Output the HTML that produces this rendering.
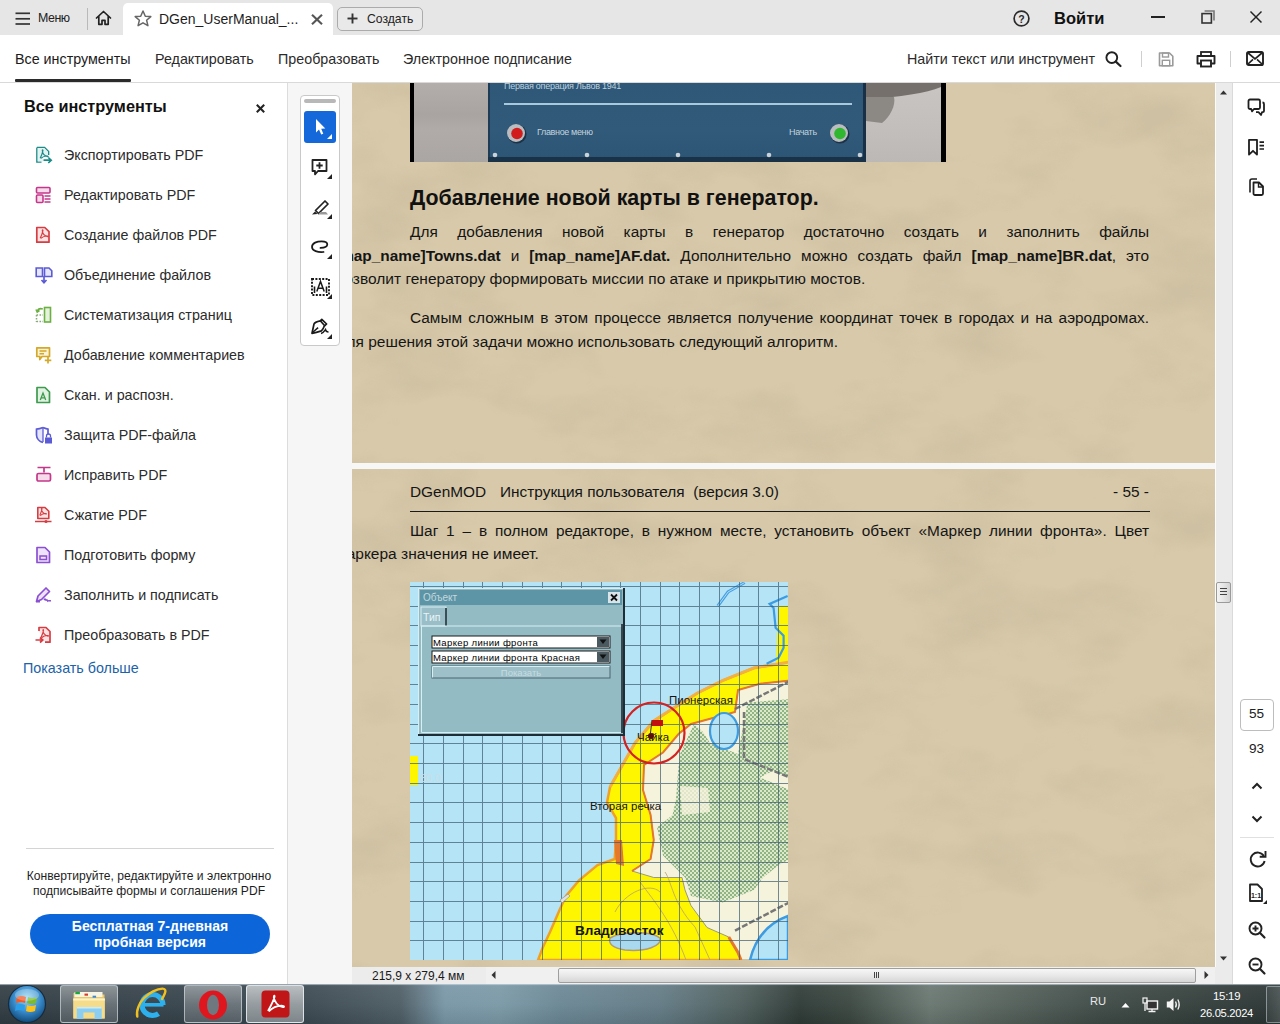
<!DOCTYPE html>
<html><head><meta charset="utf-8">
<style>
*{margin:0;padding:0;box-sizing:border-box}
html,body{width:1280px;height:1024px;overflow:hidden;background:#fff;font-family:"Liberation Sans",sans-serif;color:#222}
.a{position:absolute;white-space:nowrap;line-height:1}
svg{position:absolute;overflow:visible}
#titlebar{position:absolute;left:0;top:0;width:1280px;height:35px;background:#e6e6e6}
#toolbar{position:absolute;left:0;top:35px;width:1280px;height:48px;background:#fff;border-bottom:1px solid #d9d9d9}
#leftpanel{position:absolute;left:0;top:83px;width:288px;height:901px;background:#fff;border-right:1px solid #dcdcdc}
#graycol{position:absolute;left:288px;top:83px;width:64px;height:901px;background:#f6f6f6}
#doc{position:absolute;left:352px;top:83px;width:863px;height:884px;background:#f7f7f8;overflow:hidden}
#vscroll{position:absolute;left:1215px;top:83px;width:17px;height:884px;background:#ebebeb}
#rside{position:absolute;left:1232px;top:83px;width:48px;height:901px;background:#fff;border-left:1px solid #dadada}
#status{position:absolute;left:352px;top:967px;width:863px;height:17px;background:#ececec}
#taskbar{position:absolute;left:0;top:984px;width:1280px;height:40px;overflow:hidden}
.t{font-size:15.4px;color:#151515}
.j{position:absolute;white-space:nowrap;font-size:15.4px;line-height:1;color:#151515;text-align:justify;text-align-last:justify;white-space:normal;height:18px;overflow:visible}
</style></head><body>

<div id="titlebar">
<svg style="left:15px;top:12px" width="16" height="14"><g stroke="#333" stroke-width="1.7"><line x1="0.5" y1="1.3" x2="15" y2="1.3"/><line x1="0.5" y1="6.8" x2="15" y2="6.8"/><line x1="0.5" y1="12" x2="15" y2="12"/></g></svg>
<div class="a" style="left:38px;top:12px;font-size:12.4px;letter-spacing:-0.45px;color:#222">Меню</div>
<div style="position:absolute;left:87px;top:8px;width:1px;height:22px;background:#b9b9b9"></div>
<svg style="left:95px;top:10px" width="17" height="16" viewBox="0 0 17 16"><path d="M1.5 8 L8.5 1.5 L15.5 8 M3.8 6.2 V14.3 H7 V10.3 H10 V14.3 H13.2 V6.2" fill="none" stroke="#222" stroke-width="1.7" stroke-linejoin="round" stroke-linecap="round"/></svg>
<div style="position:absolute;left:123px;top:3px;width:210px;height:32px;background:#fff;border-radius:5px 5px 0 0"></div>
<svg style="left:134px;top:10px" width="18" height="17" viewBox="0 0 18 17"><path d="M9 1 L11.3 6.2 L16.8 6.6 L12.6 10.2 L13.9 15.7 L9 12.8 L4.1 15.7 L5.4 10.2 L1.2 6.6 L6.7 6.2 Z" fill="none" stroke="#666" stroke-width="1.5" stroke-linejoin="round"/></svg>
<div class="a" style="left:159px;top:12px;font-size:14px;color:#1e1e1e">DGen_UserManual_...</div>
<svg style="left:311px;top:14px" width="12" height="11"><g stroke="#555" stroke-width="2.1"><line x1="1" y1="0.8" x2="11" y2="10.2"/><line x1="11" y1="0.8" x2="1" y2="10.2"/></g></svg>
<div style="position:absolute;left:337px;top:7px;width:86px;height:24px;border:1px solid #ababab;border-radius:5px;background:#e9e9e9"></div>
<svg style="left:347px;top:13px" width="11" height="11"><g stroke="#333" stroke-width="1.9"><line x1="5.5" y1="0.5" x2="5.5" y2="10.5"/><line x1="0.5" y1="5.5" x2="10.5" y2="5.5"/></g></svg>
<div class="a" style="left:367px;top:13px;font-size:12.2px;color:#222">Создать</div>
<svg style="left:1013px;top:10px" width="17" height="17" viewBox="0 0 17 17"><circle cx="8.5" cy="8.5" r="7.4" fill="none" stroke="#2a2a2a" stroke-width="1.7"/><text x="8.5" y="12.6" text-anchor="middle" font-family="Liberation Sans" font-weight="700" font-size="10.5" fill="#2a2a2a">?</text></svg>
<div class="a" style="left:1054px;top:10px;font-size:16.5px;font-weight:700;color:#111">Войти</div>
<div style="position:absolute;left:1151px;top:16px;width:14px;height:2px;background:#222"></div>
<svg style="left:1201px;top:10px" width="14" height="14" viewBox="0 0 14 14"><rect x="1" y="3.6" width="9.4" height="9.4" fill="none" stroke="#333" stroke-width="1.6"/><path d="M3.6 1 H13 V10.4" fill="none" stroke="#777" stroke-width="1.6"/></svg>
<svg style="left:1250px;top:11px" width="12" height="12"><g stroke="#222" stroke-width="1.5"><line x1="0.5" y1="0.5" x2="11.5" y2="11.5"/><line x1="11.5" y1="0.5" x2="0.5" y2="11.5"/></g></svg>
</div>
<div id="toolbar">
<div class="a" style="left:15px;top:17px;font-size:14.3px;color:#1b1b1b">Все инструменты</div>
<div style="position:absolute;left:15px;top:44px;width:116px;height:3px;background:#2b2b2b;border-radius:1px"></div>
<div class="a" style="left:155px;top:17px;font-size:14.3px;color:#2b2b2b">Редактировать</div>
<div class="a" style="left:278px;top:17px;font-size:14.3px;color:#2b2b2b">Преобразовать</div>
<div class="a" style="left:403px;top:17px;font-size:14.3px;color:#2b2b2b">Электронное подписание</div>
<div class="a" style="left:907px;top:17px;font-size:14.3px;color:#2b2b2b">Найти текст или инструмент</div>
<svg style="left:1105px;top:16px" width="18" height="16" viewBox="0 0 18 16"><circle cx="6.8" cy="6.6" r="5.4" fill="none" stroke="#222" stroke-width="1.9"/><line x1="10.8" y1="10.6" x2="15.5" y2="15" stroke="#222" stroke-width="2.2" stroke-linecap="round"/></svg>
<div style="position:absolute;left:1141px;top:16px;width:1px;height:16px;background:#cfcfcf"></div>
<svg style="left:1158px;top:17px" width="16" height="15" viewBox="0 0 16 15"><path d="M1.5 1 H11.5 L14.8 4.3 V13.8 H1.5 Z" fill="none" stroke="#9a9a9a" stroke-width="1.6" stroke-linejoin="round"/><rect x="4.5" y="1" width="6" height="4" fill="none" stroke="#9a9a9a" stroke-width="1.4"/><rect x="4.3" y="8.3" width="7.4" height="5.5" fill="none" stroke="#9a9a9a" stroke-width="1.4"/></svg>
<svg style="left:1196px;top:16px" width="20" height="17" viewBox="0 0 20 17"><rect x="5" y="1" width="10" height="4" fill="none" stroke="#222" stroke-width="1.8"/><path d="M4.5 12.5 H1.5 V5 H18.5 V12.5 H15.5" fill="none" stroke="#222" stroke-width="1.9" stroke-linejoin="round"/><rect x="5" y="9.5" width="10" height="6" fill="none" stroke="#222" stroke-width="1.9"/></svg>
<div style="position:absolute;left:1230px;top:16px;width:1px;height:16px;background:#cfcfcf"></div>
<svg style="left:1246px;top:16px" width="18" height="15" viewBox="0 0 18 15"><rect x="1" y="1" width="16" height="13" rx="1.6" fill="none" stroke="#222" stroke-width="1.9"/><path d="M1.5 1.5 L9 8 L16.5 1.5 M1.5 13.5 L7 8.3 M16.5 13.5 L11 8.3" fill="none" stroke="#222" stroke-width="1.7"/></svg>
</div>
<div id="leftpanel">
<div class="a" style="left:24px;top:15px;font-size:16.3px;font-weight:700;color:#111">Все инструменты</div>
<svg style="left:256px;top:21px" width="9" height="9"><g stroke="#222" stroke-width="2"><line x1="0.8" y1="0.8" x2="8.2" y2="8.2"/><line x1="8.2" y1="0.8" x2="0.8" y2="8.2"/></g></svg>
<svg style="left:35px;top:63px" width="18" height="18" viewBox="0 0 18 18"><path d="M2 1.5 H9.5 L13.5 5.5 V9 M13.5 9" fill="none" stroke="#1b8b88" stroke-width="1.7"/><path d="M2 1.5 V16 H6.5" fill="none" stroke="#1b8b88" stroke-width="1.7"/><path d="M2.5 2 H9.3 L13 5.7 V10 H8 V15.5 H2.5Z" fill="#e3f3f2"/><path d="M5.2 12.2 C6.5 9.5 7.6 7 7.9 4.6 C8 3.5 7.2 3.6 7.3 4.8 C7.6 7.5 9.6 10 12.6 10.6 C13.4 10.8 13.4 10.1 12.4 10 C10 9.9 7.8 10.6 5.8 12.4" fill="none" stroke="#1b8b88" stroke-width="1.2"/><path d="M8.5 14.2 H16 M13.3 11.5 L16.2 14.2 L13.3 17" fill="none" stroke="#1b8b88" stroke-width="1.7"/></svg>
<div class="a" style="left:64px;top:65px;font-size:14.3px;color:#2c2c2c">Экспортировать PDF</div>
<svg style="left:35px;top:103px" width="18" height="18" viewBox="0 0 18 18"><rect x="1.5" y="1.5" width="13.5" height="5.5" rx="1" fill="#f6dcea" stroke="#c4378a" stroke-width="1.6"/><rect x="1.5" y="9" width="6.5" height="7.5" rx="1" fill="#f6dcea" stroke="#c4378a" stroke-width="1.6"/><path d="M9.5 10 H15.5 M9.5 13 H15.5 M9.5 16 H15.5" stroke="#c4378a" stroke-width="1.6"/></svg>
<div class="a" style="left:64px;top:105px;font-size:14.3px;color:#2c2c2c">Редактировать PDF</div>
<svg style="left:35px;top:143px" width="18" height="18" viewBox="0 0 18 18"><path d="M1.8 1.5 H9.8 L14 5.7 V16.2 H1.8 Z" fill="#fbe3e3" stroke="#d63d43" stroke-width="1.7" stroke-linejoin="round"/><path d="M5.2 12.2 C6.5 9.5 7.6 7 7.9 4.6 C8 3.5 7.2 3.6 7.3 4.8 C7.6 7.5 9.6 10 12.6 10.6 C13.4 10.8 13.4 10.1 12.4 10 C10 9.9 7.8 10.6 5.8 12.4" fill="none" stroke="#d63d43" stroke-width="1.2"/></svg>
<div class="a" style="left:64px;top:145px;font-size:14.3px;color:#2c2c2c">Создание файлов PDF</div>
<svg style="left:35px;top:183px" width="18" height="18" viewBox="0 0 18 18"><path d="M1.2 2 H7.5 V10.5 H1.2 Z" fill="#e6e6fb" stroke="#5b5bd6" stroke-width="1.6"/><path d="M9.5 2 H14 L16.8 4.8 V10.5 H9.5 Z" fill="#e6e6fb" stroke="#5b5bd6" stroke-width="1.6"/><path d="M9 10 V16.5 M6.5 14 L9 16.8 L11.5 14" fill="none" stroke="#5b5bd6" stroke-width="1.7"/></svg>
<div class="a" style="left:64px;top:185px;font-size:14.3px;color:#2c2c2c">Объединение файлов</div>
<svg style="left:35px;top:223px" width="18" height="18" viewBox="0 0 18 18"><rect x="9.5" y="1.5" width="6" height="14.5" fill="#e5f3dc" stroke="#6cb043" stroke-width="1.6"/><path d="M1.5 9 H8 M1.5 15.5 H8 M1.5 9 V16" stroke="#8aa87a" stroke-width="1.5" stroke-dasharray="1.6 1.4"/><path d="M7.8 3 C5 2.2 3 3 2.2 5.5 M1 3.5 L2.2 6 L4.5 4.5" fill="none" stroke="#6cb043" stroke-width="1.6"/></svg>
<div class="a" style="left:64px;top:225px;font-size:14.3px;color:#2c2c2c">Систематизация страниц</div>
<svg style="left:35px;top:263px" width="18" height="18" viewBox="0 0 18 18"><path d="M1.8 1.8 H14.5 V10.5 H7 L4.8 13.5 V10.5 H1.8 Z" fill="#fbf3d6" stroke="#d4a82a" stroke-width="1.7" stroke-linejoin="round"/><path d="M4.5 5 H11.5 M4.5 7.8 H9" stroke="#d4a82a" stroke-width="1.5"/><path d="M13 11 V17.5 M9.8 14.3 H16.3" stroke="#d4a82a" stroke-width="1.7"/></svg>
<div class="a" style="left:64px;top:265px;font-size:14.3px;color:#2c2c2c">Добавление комментариев</div>
<svg style="left:35px;top:303px" width="18" height="18" viewBox="0 0 18 18"><path d="M2 1.5 H10 L14.5 6 V16.5 H2 Z" fill="#e2f2e2" stroke="#3d9a4e" stroke-width="1.7" stroke-linejoin="round"/><path d="M5.3 14 L8 7 L10.7 14 M6.3 11.8 H9.7" fill="none" stroke="#3d9a4e" stroke-width="1.3"/></svg>
<div class="a" style="left:64px;top:305px;font-size:14.3px;color:#2c2c2c">Скан. и распозн.</div>
<svg style="left:35px;top:343px" width="18" height="18" viewBox="0 0 18 18"><path d="M8 1.5 C5.5 2.5 3.5 3 1.5 3.2 V9 C1.5 12.5 4.5 15.5 8 16.5" fill="#e6e6fb" stroke="#5b5bd6" stroke-width="1.7"/><path d="M8 1.5 C10.5 2.5 12 3 13 3.2 V8.5" fill="none" stroke="#5b5bd6" stroke-width="1.7"/><path d="M8 2 V16" stroke="#5b5bd6" stroke-width="1.3"/><rect x="10" y="11.5" width="7" height="6" fill="#5b5bd6"/><path d="M11.5 11.5 V10 A2 2 0 0 1 15.5 10 V11.5" fill="none" stroke="#5b5bd6" stroke-width="1.3"/></svg>
<div class="a" style="left:64px;top:345px;font-size:14.3px;color:#2c2c2c">Защита PDF-файла</div>
<svg style="left:35px;top:383px" width="18" height="18" viewBox="0 0 18 18"><path d="M2.5 1.5 H15.5 M9 1.5 V6.5" stroke="#c4378a" stroke-width="1.7"/><rect x="2" y="7.5" width="13.5" height="7.5" rx="1.5" fill="#f6dcea" stroke="#c4378a" stroke-width="1.7"/></svg>
<div class="a" style="left:64px;top:385px;font-size:14.3px;color:#2c2c2c">Исправить PDF</div>
<svg style="left:35px;top:423px" width="18" height="18" viewBox="0 0 18 18"><path d="M2.8 1.5 H10 L13.8 5.3 V12.5 H2.8 Z" fill="#fbe3e3" stroke="#d63d43" stroke-width="1.6" stroke-linejoin="round"/><g transform="translate(0.3,-1) scale(0.85)"><path d="M5.2 12.2 C6.5 9.5 7.6 7 7.9 4.6 C8 3.5 7.2 3.6 7.3 4.8 C7.6 7.5 9.6 10 12.6 10.6 C13.4 10.8 13.4 10.1 12.4 10 C10 9.9 7.8 10.6 5.8 12.4" fill="none" stroke="#d63d43" stroke-width="1.2"/></g><path d="M0 15.5 H16.5" stroke="#d63d43" stroke-width="1.5"/><circle cx="11" cy="15.5" r="1.6" fill="#d63d43"/></svg>
<div class="a" style="left:64px;top:425px;font-size:14.3px;color:#2c2c2c">Сжатие PDF</div>
<svg style="left:35px;top:463px" width="18" height="18" viewBox="0 0 18 18"><path d="M2 1.5 H10 L14.5 6 V16.5 H2 Z" fill="#efe2fb" stroke="#8a4fd2" stroke-width="1.7" stroke-linejoin="round"/><rect x="5" y="10" width="6.5" height="3.5" fill="none" stroke="#8a4fd2" stroke-width="1.5"/></svg>
<div class="a" style="left:64px;top:465px;font-size:14.3px;color:#2c2c2c">Подготовить форму</div>
<svg style="left:35px;top:503px" width="18" height="18" viewBox="0 0 18 18"><path d="M1.5 15.5 L3 10 L11 2 L14.5 5.5 L6.5 13.5 Z" fill="#efe2fb" stroke="#8a4fd2" stroke-width="1.7" stroke-linejoin="round"/><path d="M1.5 15.8 H5 M9 14 C10 12.5 11 13 10.5 14.5 C11.5 13.5 12.5 14 12.8 15 C13.5 14.5 14.5 15 16 14.8" fill="none" stroke="#8a4fd2" stroke-width="1.5"/></svg>
<div class="a" style="left:64px;top:505px;font-size:14.3px;color:#2c2c2c">Заполнить и подписать</div>
<svg style="left:35px;top:543px" width="18" height="18" viewBox="0 0 18 18"><path d="M4 5 V1.5 H11 L15 5.5 V16.2 H10" fill="#fbe3e3" stroke="#d63d43" stroke-width="1.7" stroke-linejoin="round"/><g transform="translate(1,0) scale(0.95)"><path d="M5.2 12.2 C6.5 9.5 7.6 7 7.9 4.6 C8 3.5 7.2 3.6 7.3 4.8 C7.6 7.5 9.6 10 12.6 10.6 C13.4 10.8 13.4 10.1 12.4 10 C10 9.9 7.8 10.6 5.8 12.4" fill="none" stroke="#d63d43" stroke-width="1.2"/></g><path d="M0.5 14 H7.5 M5 11.5 L7.8 14 L5 16.5" fill="none" stroke="#d63d43" stroke-width="1.7"/></svg>
<div class="a" style="left:64px;top:545px;font-size:14.3px;color:#2c2c2c">Преобразовать в PDF</div>
<div class="a" style="left:23px;top:578px;font-size:14.3px;color:#2062a8">Показать больше</div>
<div style="position:absolute;left:26px;top:765px;width:248px;height:1px;background:#d4d4d4"></div>
<div style="position:absolute;left:0;top:786px;width:298px;text-align:center;font-size:12.1px;line-height:15px;color:#1e1e1e">Конвертируйте, редактируйте и электронно<br>подписывайте формы и соглашения PDF</div>
<div style="position:absolute;left:30px;top:831px;width:240px;height:40px;border-radius:20px;background:#0d66d9;color:#fff;font-weight:700;font-size:14px;line-height:16px;text-align:center;padding-top:4px">Бесплатная 7-дневная<br>пробная версия</div>
</div>
<div id="graycol">
<div style="position:absolute;left:12px;top:12px;width:40px;height:251px;background:#fff;border:1px solid #c9c9c9;border-radius:4px"></div>
<div style="position:absolute;left:16px;top:16px;width:32px;height:4px;background:#b8b8b8;border-radius:2px"></div>
<div style="position:absolute;left:16px;top:28px;width:32px;height:32px;background:#1568d9;border-radius:3px"></div>
<svg style="left:16px;top:28px" width="32" height="32" viewBox="0 0 32 32"><path d="M12 8 L12 21.5 L15 18.6 L17.2 23.6 L19.3 22.7 L17.2 17.8 L21.3 17.6 Z" fill="#fff"/><path d="M28 23 V28 H23 Z" fill="#fff"/></svg>
<svg style="left:16px;top:68px" width="32" height="32" viewBox="0 0 32 32"><path d="M8.5 9 H22.5 V20 H14 L11 23.3 V20 H8.5 Z" fill="none" stroke="#222" stroke-width="1.8" stroke-linejoin="round"/><path d="M15.5 11.3 V17.7 M12.3 14.5 H18.7" stroke="#222" stroke-width="1.8"/><path d="M28 23 V28 H23 Z" fill="#222"/></svg>
<svg style="left:16px;top:108px" width="32" height="32" viewBox="0 0 32 32"><path d="M11.5 19.5 L21 10 L24 13 L14.5 22.5 Z" fill="none" stroke="#222" stroke-width="1.7" stroke-linejoin="round"/><path d="M8 23.5 L11 20.5 L13.5 23 Z" fill="#222"/><path d="M14 23.5 H24 L22 21 H16.5 Z" fill="#9a9a9a"/><path d="M28 23 V28 H23 Z" fill="#222"/></svg>
<svg style="left:16px;top:148px" width="32" height="32" viewBox="0 0 32 32"><path d="M19.5 21 C14 21.5 8 20 8 16 C8 12 13 10.3 17.6 10.3 C21 10.3 23.3 11.5 23.3 13.3 C23.3 15.5 20.5 16.8 16.5 16.9" fill="none" stroke="#1a1a1a" stroke-width="1.75" stroke-linecap="round"/><path d="M28 23 V28 H23 Z" fill="#222"/></svg>
<svg style="left:16px;top:188px" width="32" height="32" viewBox="0 0 32 32"><rect x="8" y="8" width="17" height="16" fill="none" stroke="#1a1a1a" stroke-width="1.9" stroke-dasharray="2 1.4"/><path d="M12.8 20.5 L16.5 10.5 L20.2 20.5 M14 17.3 H19" fill="none" stroke="#1a1a1a" stroke-width="1.5"/><path d="M10.5 15.5 V22 M22.5 15.5 V22" stroke="#1a1a1a" stroke-width="1.6"/><path d="M28 23 V28 H23 Z" fill="#222"/></svg>
<svg style="left:16px;top:228px" width="32" height="32" viewBox="0 0 32 32"><path d="M8 22.3 L10 13 C10.5 11.5 13 10.5 16.3 9.8 L20.5 14.5 C19.5 17.5 18.5 19 17.4 19.9 C14 21 11 21.8 8 22.3 Z" fill="none" stroke="#1a1a1a" stroke-width="1.7" stroke-linejoin="round"/><path d="M16.3 9.8 L17.8 8.3 L22.6 13 L20.6 14.9" fill="none" stroke="#1a1a1a" stroke-width="1.7" stroke-linejoin="round"/><path d="M8.5 21.5 L14.1 16.6" stroke="#1a1a1a" stroke-width="1.5"/><path d="M17 22.6 C19 22 20.5 20 21.5 18.6 C21.8 20 22.5 21 24.5 21" fill="none" stroke="#1a1a1a" stroke-width="1.6"/><path d="M28 23 V28 H23 Z" fill="#222"/></svg>
</div>
<div id="doc">
<div id="p1" style="position:absolute;left:0;top:0;width:863px;height:380px;background:#d7c9aa;overflow:hidden">
 
</div>
<div id="p2" style="position:absolute;left:0;top:386px;width:863px;height:498px;background:#d7c9aa;overflow:hidden">
 
</div>

<svg style="left:0;top:0" width="863" height="884"><defs><filter id="parch" x="0" y="0" width="100%" height="100%"><feTurbulence type="fractalNoise" baseFrequency="0.009 0.016" numOctaves="4" seed="7"/><feColorMatrix type="matrix" values="0 0 0 0 0.50  0 0 0 0 0.42  0 0 0 0 0.28  2.8 0 0 0 -1.25"/></filter></defs><rect width="863" height="884" filter="url(#parch)" opacity="0.3"/></svg>
<div style="position:absolute;left:0;top:380px;width:863px;height:6px;background:#f7f7f8"></div>
<!-- top game image -->
<div style="position:absolute;left:58px;top:0;width:536px;height:79px;background:#000"></div>
<div style="position:absolute;left:62px;top:0;width:74px;height:79px;background:linear-gradient(180deg,#b3aeac,#a9a4a2 40%,#b0aba9 60%,#aaa6a4)"></div>
<div style="position:absolute;left:514px;top:0;width:75px;height:79px;background:linear-gradient(180deg,#c9c5c3,#c2bebc 60%,#bcb8b6)"></div>
<svg style="left:514px;top:0" width="75" height="79" viewBox="0 0 75 79"><path d="M0 0 H75 V4 C60 10 35 14 0 16 Z" fill="#75706c"/><path d="M0 14 H28 C30 22 24 34 16 40 L0 38 Z" fill="#8c8884"/></svg>
<div style="position:absolute;left:136px;top:0;width:378px;height:79px;background:linear-gradient(180deg,#2f5878,#30597a 60%,#2c5575);border-left:2px solid #1e3c55;border-right:3px solid #1a3046"></div>
<div style="position:absolute;left:136px;top:74px;width:378px;height:5px;background:#1a3248"></div>
<div style="position:absolute;left:152px;top:20px;width:348px;height:2px;background:#a7c9de"></div>
<div class="a" style="left:152px;top:-1px;font-size:9px;letter-spacing:-0.25px;color:#b9cfdd">Первая операция Львов 1941</div>
<div class="a" style="left:185px;top:45px;font-size:9px;letter-spacing:-0.35px;color:#c3d3dd">Главное меню</div>
<div class="a" style="left:437px;top:45px;font-size:9px;letter-spacing:-0.3px;color:#c3d3dd">Начать</div>
<svg style="left:136px;top:0" width="378" height="79" viewBox="0 0 378 79">
 <circle cx="29" cy="51" r="9.5" fill="#1c3246"/><circle cx="28" cy="50" r="9" fill="#b9bdc0"/><circle cx="29" cy="50.5" r="5.8" fill="#d21c1c"/>
 <circle cx="352" cy="51" r="9.5" fill="#1c3246"/><circle cx="351" cy="50" r="9" fill="#b9bdc0"/><circle cx="352" cy="50.5" r="5.8" fill="#2fb82f"/>
 <g fill="#c9d2d8"><circle cx="7" cy="72" r="2.3"/><circle cx="99" cy="72" r="2.3"/><circle cx="190" cy="72" r="2.3"/><circle cx="281" cy="72" r="2.3"/><circle cx="372" cy="72" r="2.3"/></g>
</svg>

<!-- page 1 text -->
<div class="a" style="left:58px;top:105px;font-size:21.4px;font-weight:700;color:#111">Добавление новой карты в генератор.</div>
<div class="j" style="left:58px;top:141px;width:739px">Для добавления новой карты в генератор достаточно создать и заполнить файлы</div>
<div class="j" style="left:-17px;top:165px;width:814px"><b>[map_name]Towns.dat</b> и <b>[map_name]AF.dat.</b> Дополнительно можно создать файл <b>[map_name]BR.dat</b>, это</div>
<div class="a t" style="left:-16px;top:188px;font-size:15.5px">позволит генератору формировать миссии по атаке и прикрытию мостов.</div>
<div class="j" style="left:58px;top:227px;width:739px">Самым сложным в этом процессе является получение координат точек в городах и на аэродромах.</div>
<div class="a t" style="left:-16px;top:251px;font-size:15.5px">Для решения этой задачи можно использовать следующий алгоритм.</div>

<!-- page 2 text -->
<div class="a t" style="left:58px;top:401px">DGenMOD</div>
<div class="a t" style="left:148px;top:401px">Инструкция пользователя&nbsp; (версия 3.0)</div>
<div class="a t" style="left:761px;top:401px">- 55 -</div>
<div style="position:absolute;left:58px;top:428px;width:740px;height:1px;background:#1a1a1a"></div>
<div class="j" style="left:58px;top:440px;width:739px">Шаг 1 – в полном редакторе, в нужном месте, установить объект «Маркер линии фронта». Цвет</div>
<div class="a t" style="left:-16px;top:463px;font-size:15.5px">маркера значения не имеет.</div>
<svg style="left:58px;top:499px;overflow:hidden" width="378" height="378" viewBox="0 0 378 378">
<defs><pattern id="chk" width="4" height="4" patternUnits="userSpaceOnUse"><rect width="4" height="4" fill="#dfe8cb"/><rect width="2" height="2" fill="#8db684"/><rect x="2" y="2" width="2" height="2" fill="#8db684"/></pattern></defs>
<rect width="378" height="378" fill="#b5e4f6"/>
<path d="M380 80 L343.75 86 L312.5 98.6 L287.5 111 L262.5 126.75 L243.75 139 L225 161 L212.5 183 L200 205 L197 220.5 L206 236 L206 258 L204.7 277 L187.5 283 L168.75 298.6 L156 314 L150 327 L140 350 L133 365 L128 378 L380 378 Z" fill="#fdf600" stroke="#f0a028" stroke-width="2.5"/>
<path d="M368.6 24 L378 24 L378 82 L366 82 Z" fill="#fdf600"/>
<path d="M0 174 H8 V203 H0 Z" fill="#fdf600"/>
<path d="M380 98.6 L350 101.75 L328 108 L325 130 L281 142 L268.75 151.75 L253 170.5 L234 183 L233 208 L240.6 233 L243.75 258 L240.6 277 L222 289 L243.75 295.5 L272 295.5 L275 308 L281 323.6 L297 345.5 L318.75 355 L328 370.5 L331 378 L380 378 Z" fill="#f6f3dc" stroke="#9a9a80" stroke-width="1"/>
<path d="M380 98.6 L350 101.75 L328 108 L325 130 L281 142 L268.75 151.75 L253 170.5 L234 183 L233 208 L240.6 233 L243.75 258 L240.6 277 L222 289" fill="none" stroke="#e4782c" stroke-width="2"/>
<path d="M380 80 L343.75 86 L312.5 98.6 L287.5 111 L262.5 126.75 L243.75 139 L225 161 L212.5 183 L200 205" fill="none" stroke="#f3b040" stroke-width="3"/>
<path d="M204 258 L206 282 L214 284 L212 258 Z" fill="#e4782c"/>
<path d="M318.75 355 L328 370.5 L331 378" fill="none" stroke="#e4782c" stroke-width="3"/>
<path d="M284 142 L293 150 L300 161 L328 172 L337.5 120.5 L380 117 L380 195.5 L362.5 189 L350 195.5 L380 208 L380 277 L368.75 283 L353 295.5 L344 308 L312.5 320.5 L281 314 L275 295.5 L253 273.6 L247 245.5 L262.5 233 L266 217 L268 190 L270 172 Z" fill="url(#chk)"/>
<path d="M270 204 L298 206 L300 230 L272 233 Z" fill="#f6f3dc" opacity="0.8"/>
<ellipse cx="314" cy="149" rx="14" ry="18" fill="#b5e4f6" stroke="#3d9be2" stroke-width="2.2"/>
<path d="M307.8 24 L318 10 L334.7 0.5" fill="none" stroke="#4a9fe2" stroke-width="3"/><path d="M307.8 24 L318 10 L334.7 0.5" fill="none" stroke="#a8ddf6" stroke-width="1"/>
<path d="M377.6 13.9 L359.6 21.9 L363.6 25.9 L365.6 45.8 L373.6 53.8 L373.6 65.7 L368.6 75.7 L356.6 81.7" fill="none" stroke="#3d9be2" stroke-width="2.2"/>
<path d="M340 378 Q348 345 378 334 V378 Z" fill="#b5e4f6" stroke="#3d9be2" stroke-width="2.5"/>
<path d="M325 127 L380 99 M334 130 V177 L380 195.5 M325 348.6 L380 320" fill="none" stroke="#777" stroke-width="2.5" stroke-dasharray="6 2"/>
<path d="M205 330 C215 310 240 300 250 310 M230 300 C245 320 262 340 276 378 M255 290 C262 300 262 320 285 345 L300 378" fill="none" stroke="#b8a070" stroke-width="1" opacity="0.8"/><path d="M200 356 C210 350 240 348 250 356 C252 364 236 370 215 368 C203 366 198 362 200 356 Z" fill="#a9d9ef" stroke="#b09a78" stroke-width="1.5"/>
<path d="M13.5 0V378M33.5 0V378M53.5 0V378M72.5 0V378M92.5 0V378M112.5 0V378M132.5 0V378M151.5 0V378M171.5 0V378M191.5 0V378M210.5 0V378M230.5 0V378M250.5 0V378M269.5 0V378M289.5 0V378M309.5 0V378M329.5 0V378M348.5 0V378M368.5 0V378M0 4.5H378M0 24.5H378M0 43.5H378M0 63.5H378M0 83.5H378M0 102.5H378M0 122.5H378M0 142.5H378M0 161.5H378M0 181.5H378M0 201.5H378M0 220.5H378M0 240.5H378M0 260.5H378M0 280.5H378M0 299.5H378M0 319.5H378M0 339.5H378M0 358.5H378" stroke="#36566a" stroke-width="1" opacity="0.68"/>
<g font-family="Liberation Sans" font-size="11.5" fill="#151515">
<text x="259" y="122">Пионерская</text>
<text x="227" y="159">Чайка</text>
<text x="180" y="228">Вторая речка</text>
<text x="165" y="353" font-weight="700" font-size="13.6">Владивосток</text>
</g>
<text x="10" y="200" font-family="Liberation Sans" font-size="11" fill="#c9dee6">80.0</text>
<circle cx="244" cy="151" r="30.5" fill="none" stroke="#d42222" stroke-width="2.2"/>
<path d="M240 155 L242 138" stroke="#333" stroke-width="1"/>
<rect x="242" y="138" width="11" height="6" fill="#c01010"/>
<circle cx="241" cy="154" r="3" fill="#5a1010"/>
<path d="M150 318 L158 312 L160 314 L152 321 Z" fill="#e0e0e0" stroke="#888" stroke-width="0.6"/>

<!-- dialog -->
<rect x="8" y="6" width="206" height="147" fill="#92bbc4"/><path d="M11.5 44 V150.5 H211" fill="none" stroke="#d8eef2" stroke-width="1"/>
<rect x="8.5" y="6.5" width="205" height="146" fill="none" stroke="#d8eef2" stroke-width="1"/>
<path d="M214 6 V153 H8" fill="none" stroke="#1e2e36" stroke-width="2"/>
<rect x="10" y="8" width="202" height="15" fill="#5d95a6"/>
<text x="13" y="19" font-family="Liberation Sans" font-size="10" fill="#c4d8de">Объект</text>
<rect x="198" y="10" width="12" height="11" fill="#d8e4e8"/>
<path d="M201 12.5 L207 18.5 M207 12.5 L201 18.5" stroke="#111" stroke-width="1.8"/>
<rect x="11" y="25" width="25" height="19" fill="#99bec8" stroke="#d8eef2" stroke-width="1"/>
<path d="M36 26 V44" stroke="#142028" stroke-width="1.5"/>
<text x="13" y="39" font-family="Liberation Sans" font-size="10.5" fill="#e8f4f6">Тип</text>
<path d="M11 44 H212" stroke="#d8eef2" stroke-width="1"/>
<path d="M212 42 V151" stroke="#142028" stroke-width="1.5"/>
<rect x="22" y="54" width="178" height="12" fill="#fff" stroke="#1a1a1a" stroke-width="1"/>
<rect x="187" y="55" width="12" height="10" fill="#4a5a60"/>
<path d="M189.5 57.5 H196.5 L193 62 Z" fill="#111"/>
<text x="23" y="63.5" font-family="Liberation Sans" font-size="9.5" letter-spacing="0.35" fill="#000">Маркер линии фронта</text>
<rect x="22" y="69" width="178" height="12" fill="#fff" stroke="#1a1a1a" stroke-width="1"/>
<rect x="187" y="70" width="12" height="10" fill="#4a5a60"/>
<path d="M189.5 72.5 H196.5 L193 77 Z" fill="#111"/>
<text x="23" y="78.5" font-family="Liberation Sans" font-size="9.5" letter-spacing="0.35" fill="#000">Маркер линии фронта Красная</text>
<rect x="22" y="84" width="178" height="12" fill="#9dc0c9" stroke="#4c6470" stroke-width="1"/>
<path d="M22.5 95.5 V84.5 H199.5" fill="none" stroke="#d8eef2" stroke-width="1"/>
<text x="111" y="93.5" text-anchor="middle" font-family="Liberation Sans" font-size="9.5" fill="#c6dce2">Показать</text>
</svg>
</div>
<div id="vscroll">
<div style="position:absolute;left:0;top:0;width:1px;height:884px;background:#fbfbfb"></div>
<svg style="left:5px;top:7px" width="8" height="5"><path d="M0 4.5 L3.5 0.5 L7 4.5 Z" fill="#333"/></svg>
<div style="position:absolute;left:1px;top:499px;width:15px;height:21px;border:1px solid #9a9a9a;border-radius:2px;background:linear-gradient(90deg,#f4f4f4,#e6e6e6 50%,#d4d4d4)"></div>
<div style="position:absolute;left:5px;top:505px;width:7px;height:1px;background:#444;box-shadow:0 3px 0 #444,0 6px 0 #444"></div>
<svg style="left:5px;top:873px" width="8" height="5"><path d="M0 0.5 L3.5 4.5 L7 0.5 Z" fill="#333"/></svg>
</div>
<div style="position:absolute;left:1215px;top:967px;width:17px;height:17px;background:#ebebeb"></div>
<div id="rside">
<svg style="left:14px;top:15px" width="20" height="20" viewBox="0 0 20 20"><path d="M3 1.5 H11.5 A1.5 1.5 0 0 1 13 3 V9.5 A1.5 1.5 0 0 1 11.5 11 H7 L5 13.3 L4.2 11 H3 A1.5 1.5 0 0 1 1.5 9.5 V3 A1.5 1.5 0 0 1 3 1.5 Z" fill="none" stroke="#1e1e1e" stroke-width="1.8" stroke-linejoin="round"/><path d="M15.5 4.5 A1.5 1.5 0 0 1 17 6 V13 A1.2 1.2 0 0 1 15.8 14.2 H15 L14 17 L11.5 14.2 H9" fill="none" stroke="#1e1e1e" stroke-width="1.8" stroke-linejoin="round"/></svg>
<svg style="left:14px;top:55px" width="20" height="20" viewBox="0 0 20 20"><path d="M2 1.8 H10 V16.6 L6 12.8 L2 16.6 Z" fill="none" stroke="#1e1e1e" stroke-width="1.8" stroke-linejoin="round"/><path d="M12.5 4.2 H17 M12.5 7.6 H17 M12.5 11 H17" stroke="#1e1e1e" stroke-width="1.7"/></svg>
<svg style="left:14px;top:94px" width="20" height="20" viewBox="0 0 20 20"><path d="M3 15.5 V4 A2 2 0 0 1 5 2 H10" fill="none" stroke="#1e1e1e" stroke-width="1.6"/><path d="M6.5 5.5 H12 L16 9.5 V16.5 A1.5 1.5 0 0 1 14.5 18 H8 A1.5 1.5 0 0 1 6.5 16.5 Z" fill="none" stroke="#1e1e1e" stroke-width="1.8" stroke-linejoin="round"/><path d="M11.5 5.5 V10 H16" fill="none" stroke="#1e1e1e" stroke-width="1.4"/></svg>
<div style="position:absolute;left:7px;top:616px;width:34px;height:32px;border:1px solid #bdbdbd;border-radius:4px"></div>
<div class="a" style="left:16px;top:624px;font-size:13.6px;color:#222">55</div>
<div class="a" style="left:16px;top:659px;font-size:13.6px;color:#222">93</div>
<svg style="left:18px;top:699px" width="12" height="8"><path d="M1.5 6.5 L6 2 L10.5 6.5" fill="none" stroke="#222" stroke-width="2"/></svg>
<svg style="left:18px;top:732px" width="12" height="8"><path d="M1.5 1.5 L6 6 L10.5 1.5" fill="none" stroke="#222" stroke-width="2"/></svg>
<div style="position:absolute;left:7px;top:754px;width:34px;height:1px;background:#e0e0e0"></div>
<svg style="left:15px;top:766px" width="20" height="20" viewBox="0 0 20 20"><path d="M15.8 7 A7 7 0 1 0 16.6 12" fill="none" stroke="#222" stroke-width="1.9"/><path d="M17.5 2 V7.8 H11.7" fill="none" stroke="#222" stroke-width="1.9"/></svg>
<svg style="left:15px;top:800px" width="22" height="22" viewBox="0 0 22 22"><path d="M2 1.5 H9.5 L14 6 V18 H2 Z" fill="none" stroke="#222" stroke-width="1.8" stroke-linejoin="round"/><text x="8" y="14.5" text-anchor="middle" font-family="Liberation Sans" font-weight="700" font-size="7" fill="#222">1:1</text><path d="M19 17 V21 H15 Z" fill="#222"/></svg>
<svg style="left:15px;top:838px" width="20" height="20" viewBox="0 0 20 20"><circle cx="7.5" cy="7.5" r="6" fill="none" stroke="#222" stroke-width="1.9"/><path d="M7.5 4.5 V10.5 M4.5 7.5 H10.5" stroke="#222" stroke-width="1.9"/><path d="M11.8 11.8 L16.5 16.5" stroke="#222" stroke-width="2.2" stroke-linecap="round"/></svg>
<svg style="left:15px;top:874px" width="20" height="20" viewBox="0 0 20 20"><circle cx="7.5" cy="7.5" r="6" fill="none" stroke="#222" stroke-width="1.9"/><path d="M4.5 7.5 H10.5" stroke="#222" stroke-width="1.9"/><path d="M11.8 11.8 L16.5 16.5" stroke="#222" stroke-width="2.2" stroke-linecap="round"/></svg>
</div>
<div id="status">
<div class="a" style="left:20px;top:3px;font-size:12px;color:#1a1a1a">215,9 x 279,4 мм</div>
<div style="position:absolute;left:134px;top:0;width:729px;height:17px;background:#f0f0f0"></div>
<svg style="left:139px;top:4px" width="5" height="8"><path d="M4.5 0 L0.5 4 L4.5 8 Z" fill="#333"/></svg>
<div style="position:absolute;left:206px;top:1px;width:638px;height:15px;border:1px solid #9e9e9e;border-radius:2px;background:linear-gradient(180deg,#f7f7f7,#e8e8e8 50%,#d6d6d6)"></div>
<div style="position:absolute;left:522px;top:5px;width:1px;height:6px;background:#444;box-shadow:2px 0 0 #444,4px 0 0 #444"></div>
<svg style="left:852px;top:4px" width="5" height="8"><path d="M0.5 0 L4.5 4 L0.5 8 Z" fill="#333"/></svg>
</div>
<div id="taskbar">
<div style="position:absolute;left:0;top:0;width:1280px;height:40px;background:linear-gradient(90deg,#2f3b42 0px,#3a474f 300px,#4d5c64 400px,#7896a6 445px,#7a98a6 500px,#6a8694 560px,#627a84 660px,#4e5e5c 740px,#2e3a36 800px,#3a4640 850px,#687670 930px,#58645e 990px,#3e4a46 1100px,#2e3836 1240px,#2a3434 1280px)"></div>
<div style="position:absolute;left:0;top:0;width:1280px;height:40px;background:linear-gradient(180deg,rgba(255,255,255,0.22) 0px,rgba(255,255,255,0.08) 2px,rgba(255,255,255,0.04) 20px,rgba(0,0,0,0.08) 40px)"></div>
<div style="position:absolute;left:0;top:0;width:1280px;height:1px;background:rgba(200,215,225,0.55)"></div>
<svg style="left:7px;top:0px" width="40" height="40" viewBox="0 0 40 40">
 <defs><radialGradient id="orb" cx="50%" cy="35%" r="65%"><stop offset="0" stop-color="#9adcf8"/><stop offset="0.55" stop-color="#3a8ccc"/><stop offset="1" stop-color="#104a7a"/></radialGradient></defs>
 <circle cx="20" cy="20" r="18.5" fill="url(#orb)" stroke="#1a2a3a" stroke-width="1.2"/>
 <path d="M10 13 Q14 11 19 13 L18 19 Q13 17 9 19 Z" fill="#f25a26"/>
 <path d="M21 13 Q25 15 30 13 L29 19 Q24 21 20 19 Z" fill="#7cbb2c"/>
 <path d="M9 21 Q13 19 18 21 L17 27 Q12 25 8 27 Z" fill="#2a9ee8"/>
 <path d="M20 21 Q24 23 29 21 L28 27 Q23 29 19 27 Z" fill="#fcc21a"/>
 <ellipse cx="20" cy="11" rx="12" ry="6" fill="#fff" opacity="0.25"/>
</svg>
<div style="position:absolute;left:60px;top:1px;width:58px;height:38px;border:1px solid rgba(220,230,235,0.6);border-radius:3px;background:linear-gradient(180deg,rgba(255,255,255,0.4),rgba(255,255,255,0.24) 50%,rgba(255,255,255,0.16))"></div>
<svg style="left:72px;top:5px" width="36" height="32" viewBox="0 0 36 32"><path d="M1.5 4 H10 L11.5 5.5 H32.5 V29.5 H1.5 Z" fill="#e9c86a"/><rect x="2.5" y="3" width="28" height="5" fill="#f8f4e4"/><rect x="3.3" y="3" width="4.6" height="2.2" fill="#1aa83a"/><rect x="12.5" y="4.6" width="3.5" height="2.1" fill="#d83a2a"/><rect x="20.6" y="6.7" width="3.5" height="2" fill="#3a8ad8"/><path d="M1.3 9.5 H32.8 V29.5 H1.3 Z" fill="#f5dc8a"/><path d="M1.3 9.5 H32.8 V11.5 H1.3 Z" fill="#fff3c4"/><path d="M4.8 18 H29.7 V30 H22.6 V23.4 H11.4 V30 H4.8 Z" fill="#8ccdf2"/><path d="M4.8 18 H29.7 V19.5 H4.8 Z" fill="#c8ecfc"/></svg>
<svg style="left:133px;top:3px" width="36" height="34" viewBox="0 0 36 34"><circle cx="19.5" cy="18" r="10.5" fill="none" stroke="#2cb0ee" stroke-width="5.2" stroke-dasharray="0 10 56 0"/><rect x="9" y="16" width="21.5" height="3.6" fill="#2cb0ee"/><path d="M4.3 29.5 C3 24 6 16 11 11 C16 6 24 1.5 29.7 1.6 C32.5 1.7 33 4 31.8 6.5 C31 8.5 30 10.5 29 12" fill="none" stroke="#f0c020" stroke-width="2.4" stroke-linecap="round"/></svg>
<div style="position:absolute;left:184px;top:1px;width:58px;height:38px;border:1px solid rgba(220,230,235,0.6);border-radius:3px;background:linear-gradient(180deg,rgba(255,255,255,0.4),rgba(255,255,255,0.24) 50%,rgba(255,255,255,0.16))"></div>
<svg style="left:197px;top:5px" width="32" height="32" viewBox="0 0 32 32"><ellipse cx="16" cy="16" rx="14" ry="14.5" fill="#e0161e"/><ellipse cx="16" cy="16" rx="6" ry="10.2" fill="#6e787e"/></svg>
<div style="position:absolute;left:246px;top:1px;width:58px;height:38px;border:1px solid rgba(235,240,245,0.85);border-radius:3px;background:linear-gradient(180deg,rgba(255,255,255,0.62),rgba(255,255,255,0.45) 50%,rgba(255,255,255,0.36))"></div>
<svg style="left:261px;top:6px" width="29" height="28" viewBox="0 0 29 28"><rect x="0.5" y="0.5" width="28" height="27" rx="4" fill="#c01618"/><path d="M7 21 C9.5 16.5 12.5 11 13.5 7 C14 5 12.5 5 12.8 7.5 C13.5 12 17 16.5 22 17 C23.5 17.2 23.5 16 21.8 15.8 C17.5 15.5 12 17 7.8 21.5" fill="none" stroke="#fff" stroke-width="1.8"/></svg>
<div class="a" style="left:1090px;top:12px;font-size:11.2px;color:#e8e8e8">RU</div>
<svg style="left:1121px;top:18px" width="9" height="6"><path d="M0.5 5.5 L4.5 1 L8.5 5.5 Z" fill="#fff"/></svg>
<svg style="left:1142px;top:13px" width="17" height="16" viewBox="0 0 17 16"><rect x="5" y="4" width="10.5" height="8" fill="#333" stroke="#f4f4f4" stroke-width="1.4"/><path d="M10 12 V14.5 M6.5 14.5 H13.5" stroke="#f4f4f4" stroke-width="1.3"/><rect x="1" y="1" width="4" height="5" fill="none" stroke="#f4f4f4" stroke-width="1.2"/><path d="M3 6 V14" stroke="#f4f4f4" stroke-width="1.3"/></svg>
<svg style="left:1166px;top:13px" width="15" height="15" viewBox="0 0 15 15"><path d="M0.8 4.5 H3.5 L7.5 1 V14 L3.5 10.5 H0.8 Z" fill="#f4f4f4"/><path d="M9.5 4.5 Q11.2 7.5 9.5 10.5 M11.8 2.5 Q14.6 7.5 11.8 12.5" fill="none" stroke="#f4f4f4" stroke-width="1.3"/></svg>
<div class="a" style="left:1213px;top:7px;font-size:11.3px;color:#fff;letter-spacing:-0.2px">15:19</div>
<div class="a" style="left:1200px;top:24px;font-size:11.2px;color:#fff;letter-spacing:-0.3px">26.05.2024</div>
<div style="position:absolute;left:1266px;top:2px;width:14px;height:37px;border:1px solid rgba(200,210,215,0.5);border-right:none;border-radius:2px 0 0 2px;background:linear-gradient(90deg,rgba(255,255,255,0.06),rgba(255,255,255,0.14))"></div>
</div>

</body></html>
